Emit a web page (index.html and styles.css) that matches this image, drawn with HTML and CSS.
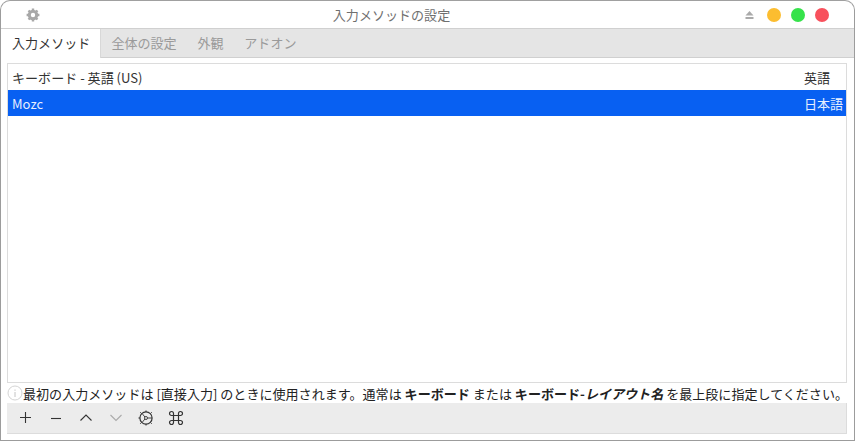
FILE: index.html
```html
<!DOCTYPE html>
<html lang="ja">
<head>
<meta charset="utf-8">
<title>入力メソッドの設定</title>
<link rel="stylesheet" href="styles.css">
</head>
<body>
<div class="window">
  <header class="titlebar">
    <svg class="gear" width="14" height="14" viewBox="0 0 14 14"><circle cx="7" cy="7" r="3.7" fill="none" stroke="#a8a8a8" stroke-width="3"/><g stroke="#a8a8a8" stroke-width="2.4"><path d="M7 0.6V3M7 11V13.4M0.6 7H3M11 7H13.4M2.5 2.5L4.2 4.2M9.8 9.8L11.5 11.5M11.5 2.5L9.8 4.2M4.2 9.8L2.5 11.5"/></g></svg>
    <div class="title">入力メソッドの設定</div>
    <div class="controls">
      <svg class="eject" width="9" height="8" viewBox="0 0 9 8"><path d="M4.5 0L8.5 4.5H0.5Z" fill="#aaa"/><rect x="0.5" y="6" width="8" height="2" fill="#aaa"/></svg>
      <span class="dot yellow"></span><span class="dot green"></span><span class="dot red"></span>
    </div>
  </header>
  <nav class="tabs">
    <div class="tab active">入力メソッド</div>
    <div class="tab">全体の設定</div>
    <div class="tab">外観</div>
    <div class="tab">アドオン</div>
  </nav>
  <main class="content">
    <div class="list">
      <div class="row"><span>キーボード - 英語 (US)</span><span class="lang">英語</span></div>
      <div class="row selected"><span>Mozc</span><span class="lang">日本語</span></div>
    </div>
    <div class="hint">
      <svg class="info" width="16" height="16" viewBox="0 0 16 16"><circle cx="8" cy="8" r="7" fill="none" stroke="#d4d4d4"/><path d="M8 4.5V5.8M8 7V12" stroke="#c4c4c4" fill="none"/></svg>
      <span>最初の入力メソッドは [直接入力] のときに使用されます。通常は <b>キーボード</b> または <b>キーボード-<i>レイアウト名</i></b> を最上段に指定してください。</span>
    </div>
    <div class="toolbar">
      <svg class="tool" width="16" height="16" viewBox="0 0 16 16"><path d="M7.5 2V13M2 7.5H13" stroke="#333" stroke-width="1.1" fill="none"/></svg>
      <svg class="tool" width="16" height="16" viewBox="0 0 16 16"><path d="M3 8.5H13" stroke="#333" stroke-width="1.1" fill="none"/></svg>
      <svg class="tool" width="16" height="16" viewBox="0 0 16 16"><path d="M2.5 10.5L8 5L13.5 10.5" stroke="#333" stroke-width="1.1" fill="none"/></svg>
      <svg class="tool" width="16" height="16" viewBox="0 0 16 16"><path d="M2.5 5L8 10.5L13.5 5" stroke="#aaa" stroke-width="1.1" fill="none"/></svg>
      <svg class="tool" width="16" height="16" viewBox="0 0 16 16"><circle cx="8" cy="8" r="6.1" fill="none" stroke="#333" stroke-width="1.2"/><circle cx="8" cy="8" r="1.5" fill="none" stroke="#333" stroke-width="0.9"/><path d="M4.2 3.6L6.9 7M4.2 12.4L6.9 9M9.5 8H14M8 0.4V2M8 14V15.6M0.4 8H2M3.2 3.2L2.2 2.2M3.2 12.8L2.2 13.8M12.8 3.2L13.8 2.2M12.8 12.8L13.8 13.8" stroke="#333" stroke-width="0.9" fill="none"/></svg>
      <svg class="tool" width="16" height="16" viewBox="0 0 16 16"><path d="M5.5 5.5H10.5V10.5H5.5ZM5.5 5.5V3.7A2 2 0 1 0 3.5 5.5H12.5A2 2 0 1 0 10.5 3.7V12.3A2 2 0 1 0 12.5 10.5H3.5A2 2 0 1 0 5.5 12.3V5.5" stroke="#333" stroke-width="1.2" fill="none"/></svg>
    </div>
  </main>
</div>
</body>
</html>
```
FILE: styles.css
```css
* { box-sizing: border-box; }
html, body { margin: 0; padding: 0; background: #fff; }
body { width: 855px; height: 441px; overflow: hidden; font-family: "Noto Sans CJK JP", "Noto Sans", sans-serif; font-size: 9.8pt; color: #333; }
.window { width: 855px; height: 441px; border: 1px solid #9c9c9c; border-top-color: #a0a0a0; border-radius: 10px 10px 0 0; display: flex; flex-direction: column; background: #fff; overflow: hidden; }
.titlebar { height: 28px; flex: none; display: flex; align-items: center; padding: 0 25px 0 25px; border-bottom: 1px solid #d0d0d0; }
.gear { flex: none; }
.title { flex: 1; text-align: center; padding-right: 2px; line-height: 28px; color: #6f6f6f; }
.controls { flex: none; display: flex; align-items: center; gap: 10px; }
.eject { margin-right: 3px; }
.dot { width: 14px; height: 14px; border-radius: 50%; }
.yellow { background: #fcbd30; }
.green { background: #36e24b; }
.red { background: #f8505c; }
.tabs { height: 29px; flex: none; display: flex; background: #e5e5e5; border-bottom: 1px solid #d0d0d0; }
.tab { padding: 0 10.4px; line-height: 28px; color: #9a9a9a; }
.tab.active { width: 100px; background: #fff; color: #333; border-right: 1px solid #d8d8d8; margin-bottom: -1px; padding: 0 0 0 11px; }
.content { flex: 1; display: flex; flex-direction: column; padding: 5px 7px 6px 6px; min-height: 0; }
.list { flex: 1; border: 1px solid #dcdcdc; min-height: 0; }
.row { height: 26px; display: flex; justify-content: space-between; align-items: center; padding: 0 2px 0 4px; color: #333; }
.lang { width: 40px; flex: none; white-space: nowrap; }
.row.selected { background: #0860f2; color: #e6eefe; }
.hint { height: 20px; flex: none; display: flex; align-items: center; white-space: nowrap; color: #222; }
.info { flex: none; }
.hint b { font-weight: 700; }
.toolbar { height: 31px; flex: none; background: #ececec; border-bottom: 1px solid #dcdcdc; border-right: 1px solid #dcdcdc; display: flex; align-items: center; padding: 0 0 0 11px; gap: 14px; }
.tool { flex: none; }
```
